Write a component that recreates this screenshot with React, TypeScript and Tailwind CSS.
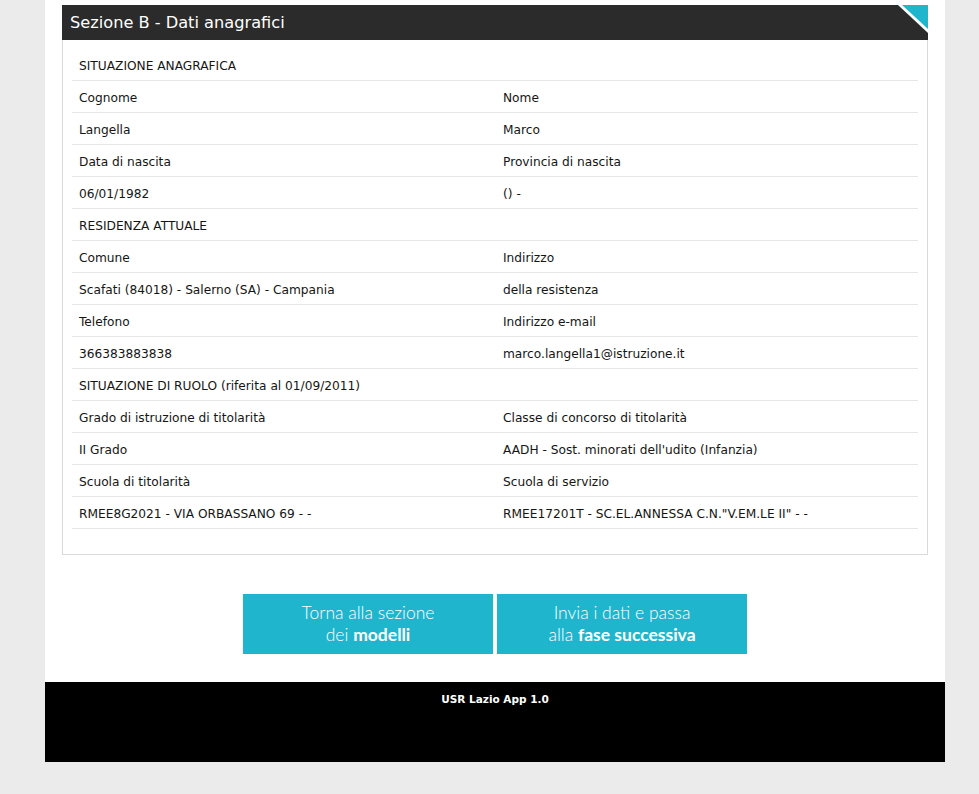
const rows: [string, string][] = [
  ['SITUAZIONE ANAGRAFICA', ''],
  ['Cognome', 'Nome'],
  ['Langella', 'Marco'],
  ['Data di nascita', 'Provincia di nascita'],
  ['06/01/1982', '() -'],
  ['RESIDENZA ATTUALE', ''],
  ['Comune', 'Indirizzo'],
  ['Scafati (84018) - Salerno (SA) - Campania', 'della resistenza'],
  ['Telefono', 'Indirizzo e-mail'],
  ['366383883838', 'marco.langella1@istruzione.it'],
  ['SITUAZIONE DI RUOLO (riferita al 01/09/2011)', ''],
  ['Grado di istruzione di titolarità', 'Classe di concorso di titolarità'],
  ['II Grado', "AADH - Sost. minorati dell'udito (Infanzia)"],
  ['Scuola di titolarità', 'Scuola di servizio'],
  ['RMEE8G2021 - VIA ORBASSANO 69 - -', 'RMEE17201T - SC.EL.ANNESSA C.N."V.EM.LE II" - -'],
];

export default function App() {
  return (
    <div className="min-h-[794px] bg-[#ebebeb] font-['DejaVu_Sans',Verdana,sans-serif]">
      <div className="ml-[45px] w-[900px] bg-white pt-[5px] pb-[28px]">
        {/* pannello sezione B */}
        <div className="mx-[17px]">
          <div className="relative h-[35px] bg-[#2b2b2b] pl-[8px] pt-[2px] flex items-center text-white text-[16.2px]">
            Sezione B - Dati anagrafici
            <svg className="absolute right-0 top-0" width="30" height="28" viewBox="0 0 30 28">
              <polygon points="0,0 30,0 30,28" fill="#ffffff" />
              <polygon points="4,0 30,0 30,24" fill="#1fb6cd" />
            </svg>
          </div>
          <div className="border border-t-0 border-[#d9d9d9] px-[9px] pt-[8px] pb-[25px]">
            <table className="w-full text-[12.2px] text-[#151515] border-collapse table-fixed">
              <tbody>
                {rows.map(([a, b], i) => (
                  <tr key={i} className="h-[32px] border-b border-[#e6e6e6]">
                    <td className="pl-[7px] pt-[5px] align-middle">{a}</td>
                    <td className="pl-[8px] pt-[5px] align-middle">{b}</td>
                  </tr>
                ))}
              </tbody>
            </table>
          </div>
        </div>

        <div className="mt-[39px] flex justify-center gap-[4px] font-['Lato',sans-serif] font-light text-white text-[17.5px] leading-[22px]">
          <button className="w-[250px] h-[60px] bg-[#1fb6cd] flex flex-col items-center justify-center">
            <span>Torna alla sezione</span>
            <span>dei <b className="font-bold">modelli</b></span>
          </button>
          <button className="w-[250px] h-[60px] bg-[#1fb6cd] flex flex-col items-center justify-center">
            <span>Invia i dati e passa</span>
            <span>alla <b className="font-bold">fase successiva</b></span>
          </button>
        </div>
      </div>

      <div className="ml-[45px] w-[900px] h-[80px] bg-black text-white text-[10.5px] font-bold text-center pt-[10px]">
        USR Lazio App 1.0
      </div>
    </div>
  );
}
